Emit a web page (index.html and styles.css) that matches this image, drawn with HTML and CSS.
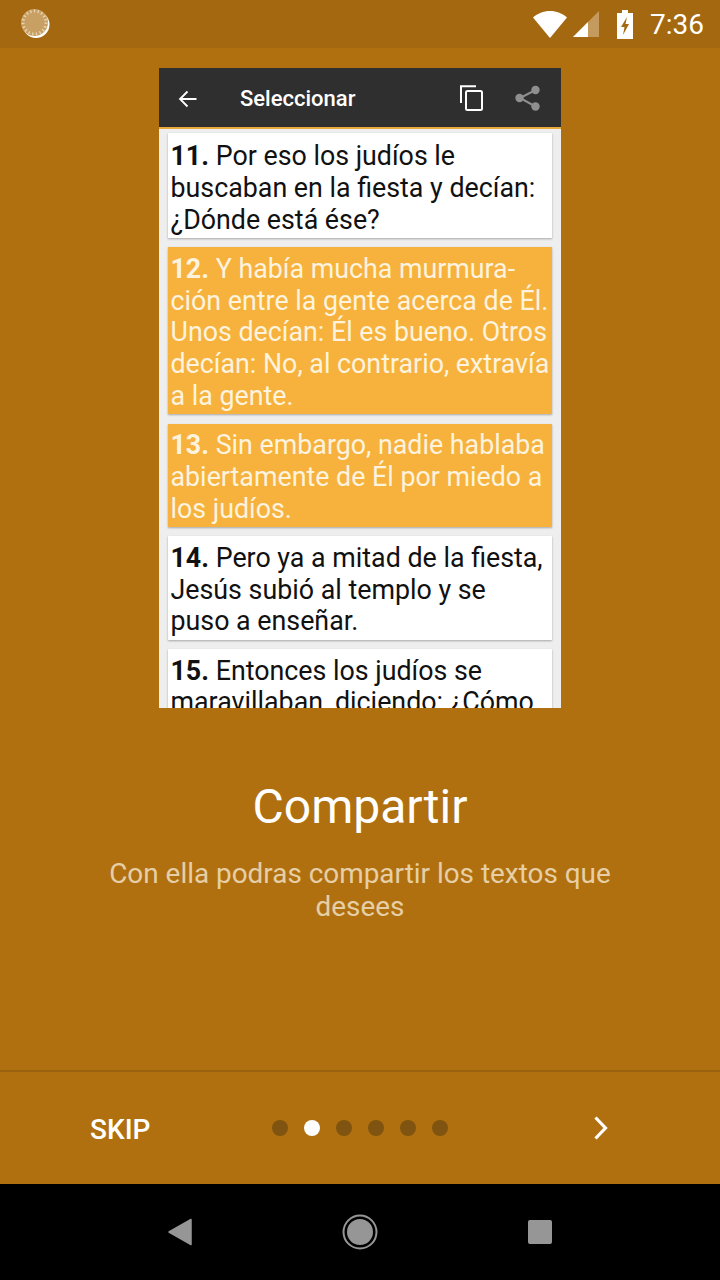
FILE: index.html
```html
<!DOCTYPE html>
<html>
<head>
    <title>Compartir</title>
    <meta charset="UTF-8">
    <meta name="viewport" content="width=device-width, initial-scale=1.0">
    <link rel="stylesheet" href="styles.css">
</head>
<body>

<div class="page">
    <header class="status">
        <svg class="status-app" width="32" height="32" viewBox="0 0 32 32">
            <circle cx="16" cy="16.500" r="13.500" fill="#fff"/>
            <circle cx="14.500" cy="14.500" r="13.500" fill="#c9a063"/>
            <circle cx="14.500" cy="14.500" r="11.500" fill="none" stroke="#e8d3b0" stroke-width="3" stroke-dasharray="1.400 2.400"/>
        </svg>
        <div class="status-icons">
            <svg width="34" height="27" viewBox="0 0 34 27"><path d="M0 6.500C4.500 2.500 10.500 0 17 0s12.500 2.500 17 6.500L17 27z" fill="#fff"/></svg>
            <svg class="status-signal" width="26" height="26" viewBox="0 0 26 26"><path d="M0 26L26 0v26z" fill="#c49a5f"/><path d="M0 26L15 11v15z" fill="#fff"/></svg>
            <svg class="status-battery" width="16" height="29" viewBox="0 0 16 29"><path d="M5 0h6v3h5v26H0V3h5z" fill="#fff"/><path d="M10 7L4 17h3.500L6 25l6-11H8.500z" fill="#a46810"/></svg>
            <span class="status-time">7:36</span>
        </div>
    </header>

    <main class="main">
        <div class="phone">
            <div class="phone-bar">
                <svg class="phone-back" width="20" height="20" viewBox="0 0 20 20"><path d="M18.500 10H2.500M9.500 2.500L2 10l7.500 7.500" fill="none" stroke="#fff" stroke-width="1.800"/></svg>
                <span class="phone-title">Seleccionar</span>
                <svg class="phone-copy" width="23" height="26" viewBox="0 0 23 26"><path d="M1 18V1.200h15" fill="none" stroke="#fff" stroke-width="2"/><rect x="6" y="6" width="16" height="19" rx="1.500" fill="none" stroke="#fff" stroke-width="2"/></svg>
                <svg class="phone-share" width="26" height="26" viewBox="0 0 26 26"><path d="M20.500 5L5 13l15.500 8.500" fill="none" stroke="#8f8f8f" stroke-width="2"/><circle cx="20.500" cy="5" r="4.200" fill="#8f8f8f"/><circle cx="4.500" cy="13" r="4.200" fill="#8f8f8f"/><circle cx="20.500" cy="21.500" r="4.200" fill="#8f8f8f"/></svg>
            </div>
            <div class="verses">
                <div class="verse"><b>11.</b> Por eso los judíos le<br>buscaban en la fiesta y decían:<br>¿Dónde está ése?</div>
                <div class="verse active"><b>12.</b> Y había mucha murmura-<br>ción entre la gente acerca de Él.<br>Unos decían: Él es bueno. Otros<br>decían: No, al contrario, extravía<br>a la gente.</div>
                <div class="verse active"><b>13.</b> Sin embargo, nadie hablaba<br>abiertamente de Él por miedo a<br>los judíos.</div>
                <div class="verse"><b>14.</b> Pero ya a mitad de la fiesta,<br>Jesús subió al templo y se<br>puso a enseñar.</div>
                <div class="verse"><b>15.</b> Entonces los judíos se<br>maravillaban, diciendo: ¿Cómo</div>
            </div>
        </div>
        <h1 class="title">Compartir</h1>
        <p class="desc">Con ella podras compartir los textos que desees</p>
    </main>

    <footer class="footer">
        <span class="footer-skip">SKIP</span>
        <div class="dots">
            <span class="dot"></span>
            <span class="dot active"></span>
            <span class="dot"></span>
            <span class="dot"></span>
            <span class="dot"></span>
            <span class="dot"></span>
        </div>
        <svg class="footer-next" width="16" height="24" viewBox="0 0 16 24"><path d="M2.500 1.500L12.500 12 2.500 22.500" fill="none" stroke="#fff" stroke-width="3.200"/></svg>
    </footer>

    <nav class="nav">
        <svg width="24" height="28" viewBox="0 0 24 28"><path d="M23 1.500v25L1 14z" fill="#969696" stroke="#969696" stroke-width="1.500" stroke-linejoin="round"/></svg>
        <svg width="36" height="36" viewBox="0 0 36 36"><circle cx="18" cy="18" r="16.500" fill="none" stroke="#969696" stroke-width="2"/><circle cx="18" cy="18" r="13" fill="#969696"/></svg>
        <div class="nav-square"></div>
    </nav>
</div>

</body>
</html>
```

FILE: styles.css
```css
/* page */
body{
    margin:0;
    padding:0;
    background-color:#b07010;
    font:normal 16px Roboto, "Liberation Sans", sans-serif;
}
.page{
    display:flex;
    flex-direction:column;
    width:720px;
    height:1280px;
    overflow:hidden;
}
/* status bar */
.status{
    display:flex;
    justify-content:space-between;
    align-items:center;
    height:48px;
    padding:0 16px 0 20px;
    background-color:#a46810;
    color:#fff;
}
.status-icons{
    display:flex;
    align-items:center;
}
.status-signal{
    margin-left:6px;
}
.status-battery{
    margin-left:18px;
}
.status-time{
    margin-left:17px;
    padding-top:2px;
    font-size:28px;
    line-height:46px;
}
/* main */
.main{
    flex:1;
    display:flex;
    flex-direction:column;
    align-items:center;
    padding-top:20px;
}
.phone{
    display:flex;
    flex-direction:column;
    flex:none;
    width:402px;
    height:640px;
    overflow:hidden;
    background-color:#eeeeee;
}
.phone-bar{
    display:flex;
    align-items:center;
    flex:none;
    height:57px;
    padding-top:2px;
    border-bottom:2px solid #e8a93a;
    background-color:#2f2f2f;
}
.phone-back{
    margin-left:19px;
}
.phone-title{
    flex:1;
    margin-left:42px;
    color:#fff;
    font-size:22px;
    font-weight:500;
}
.phone-copy{
    margin-top:-2px;
}
.phone-share{
    margin:-2px 20px 0 32px;
}
/* verses */
.verses{
    display:flex;
    flex-direction:column;
    gap:9.500px;
    padding:4px 9px 0;
}
.verse{
    flex:none;
    padding:6.500px 0 1.500px 2.500px;
    background-color:#fff;
    box-shadow:0 1px 2px rgba(0,0,0,.3);
    color:#111;
    font-size:26.800px;
    line-height:31.750px;
    white-space:nowrap;
}
.verse:first-child{
    padding-top:8px;
}
.verse b{
    font-weight:700;
}
.verse.active{
    background-color:#f6b23c;
    color:#fdf3df;
}
/* text */
.title{
    margin:70px 0 0;
    color:#fff;
    font-size:48px;
    font-weight:400;
    line-height:58px;
}
.desc{
    width:540px;
    margin:21px 0 0;
    color:#e6cfa6;
    font-size:27.900px;
    line-height:33px;
    text-align:center;
}
/* footer */
.footer{
    display:flex;
    align-items:center;
    flex:none;
    height:112px;
    border-top:2px solid #9a620e;
    color:#fff;
}
.footer-skip{
    margin:2px 0 0 90px;
    font-size:28px;
    font-weight:500;
}
.dots{
    display:flex;
    gap:16px;
    margin-left:122px;
}
.dot{
    width:16px;
    height:16px;
    border-radius:50%;
    background-color:#7f5410;
}
.dot.active{
    background-color:#fff;
}
.footer-next{
    margin-left:145px;
}
/* nav */
.nav{
    display:flex;
    justify-content:center;
    align-items:center;
    gap:150px;
    flex:none;
    height:96px;
    background-color:#000;
}
.nav-square{
    width:24px;
    height:24px;
    border-radius:2px;
    background-color:#969696;
}
```
